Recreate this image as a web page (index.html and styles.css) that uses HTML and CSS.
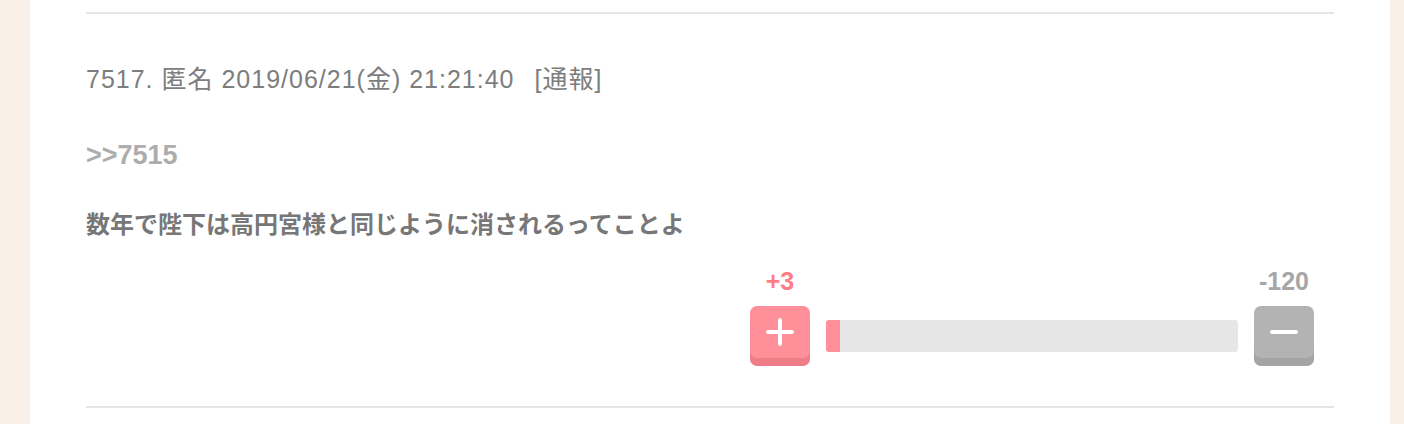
FILE: index.html
```html
<!DOCTYPE html>
<html lang="ja">
<head>
    <meta charset="UTF-8">
    <meta name="viewport" content="width=device-width, initial-scale=1.0">
    <title>コメント</title>
    <link rel="stylesheet" href="styles.css">
</head>
<body>
    <div class="page">
        <div class="comment">
            <div class="comment-head">
                7517. 匿名 2019/06/21(金) 21:21:40 <span class="report">[通報]</span>
            </div>
            <div class="anchor">&gt;&gt;7515</div>
            <div class="comment-body">数年で陛下は高円宮様と同じように消されるってことよ</div>
            <div class="vote">
                <div class="vote-col">
                    <span class="count plus-count">+3</span>
                    <button class="vote-btn plus">
                        <svg width="28" height="28" viewBox="0 0 28 28"><path d="M14 2v24M2 14h24" stroke="#fff" stroke-width="4" stroke-linecap="round"/></svg>
                    </button>
                </div>
                <div class="bar">
                    <div class="bar-fill" style="width: 3.4%"></div>
                </div>
                <div class="vote-col">
                    <span class="count minus-count">-120</span>
                    <button class="vote-btn minus">
                        <svg width="28" height="28" viewBox="0 0 28 28"><path d="M2 14h24" stroke="#fff" stroke-width="4" stroke-linecap="round"/></svg>
                    </button>
                </div>
            </div>
        </div>
    </div>
</body>
</html>
```
FILE: styles.css
```css
* {
    box-sizing: border-box;
    margin: 0;
    padding: 0;
}

body {
    background-color: #f9f1e7;
    font-family: 'Liberation Sans', 'Noto Sans CJK JP', sans-serif;
    height: 424px;
    overflow: hidden;
}

.page {
    background-color: #fff;
    margin: 0 14px 0 30px;
    padding: 12px 56px 0 56px;
    height: 424px;
}

.comment {
    border-top: 2px solid #e5e5e5;
    border-bottom: 2px solid #e5e5e5;
    height: 396px;
    padding-top: 50px;
}

.comment-head {
    font-size: 25px;
    letter-spacing: 1px;
    color: #7d7d7d;
    line-height: 30px;
    height: 30px;
}

.report {
    margin-left: 12px;
}

.anchor {
    margin-top: 46px;
    font-size: 27px;
    font-weight: bold;
    color: #adadad;
    line-height: 30px;
    height: 30px;
}

.comment-body {
    margin-top: 40px;
    font-size: 24px;
    font-weight: bold;
    color: #777;
    line-height: 30px;
    height: 30px;
}

.vote {
    display: flex;
    align-items: flex-end;
    margin: 26px 20px 0 auto;
    width: 564px;
}

.vote-col {
    display: flex;
    flex-direction: column;
    align-items: center;
    width: 60px;
}

.count {
    font-size: 25px;
    font-weight: bold;
    line-height: 30px;
    height: 30px;
    margin-bottom: 10px;
}

.plus-count {
    color: #ff7c88;
}

.minus-count {
    color: #a6a6a6;
}

.vote-btn {
    width: 60px;
    height: 52px;
    margin-bottom: 8px;
    border: none;
    border-radius: 7px;
    display: flex;
    align-items: center;
    justify-content: center;
    cursor: pointer;
}

.plus {
    background-color: #ff8f99;
    box-shadow: 0 8px 0 #ee7d88;
}

.minus {
    background-color: #b3b3b3;
    box-shadow: 0 8px 0 #a4a4a4;
}

.bar {
    flex: 1;
    height: 32px;
    margin: 0 16px 14px 16px;
    background-color: #e6e6e6;
    border-radius: 3px;
    overflow: hidden;
}

.bar-fill {
    height: 100%;
    background-color: #ff8f99;
}
```
